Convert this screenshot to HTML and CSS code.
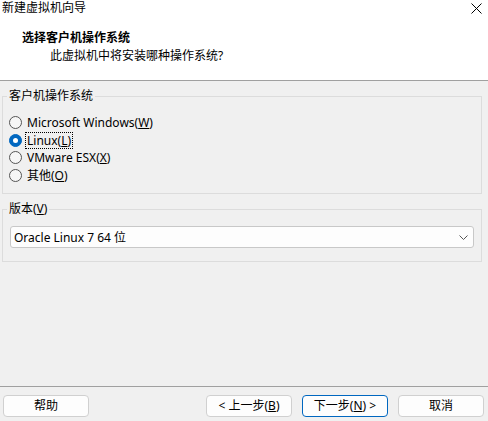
FILE: index.html
```html
<!DOCTYPE html>
<html lang="zh-CN">
<head>
<meta charset="utf-8">
<title>新建虚拟机向导</title>
<link rel="stylesheet" href="styles.css">
</head>
<body>
<div class="window">
  <div class="top">
    <div class="titlebar">
      <span class="title">新建虚拟机向导</span>
      <svg class="close" width="11" height="11" viewBox="0 0 11 11"><path d="M0.5 0.5 L10.5 10.5 M10.5 0.5 L0.5 10.5" stroke="#000" stroke-width="1" fill="none"/></svg>
    </div>
    <div class="heading">选择客户机操作系统</div>
    <div class="subheading">此虚拟机中将安装哪种操作系统?</div>
  </div>
  <div class="main">
    <fieldset class="group group-os">
      <legend class="legend">客户机操作系统</legend>
      <div class="radio-list">
        <div class="radio-row"><span class="radio"></span><span class="label">Microsoft Windows(<u>W</u>)</span></div>
        <div class="radio-row"><span class="radio checked"></span><span class="label focus">Linux(<u>L</u>)</span></div>
        <div class="radio-row"><span class="radio"></span><span class="label">VMware ESX(<u>X</u>)</span></div>
        <div class="radio-row"><span class="radio"></span><span class="label">其他(<u>O</u>)</span></div>
      </div>
    </fieldset>
    <fieldset class="group group-ver">
      <legend class="legend">版本(<u>V</u>)</legend>
      <div class="select">
        <span class="select-text">Oracle Linux 7 64 位</span>
        <svg class="chev" width="9" height="5" viewBox="0 0 9 5"><path d="M0.5 0.5 L4.5 4.5 L8.5 0.5" stroke="#555" stroke-width="1" fill="none"/></svg>
      </div>
    </fieldset>
  </div>
  <div class="footer">
    <button class="btn">帮助</button>
    <div class="spacer"></div>
    <button class="btn">&lt; 上一步(<u>B</u>)</button>
    <button class="btn primary">下一步(<u>N</u>) &gt;</button>
    <button class="btn">取消</button>
  </div>
</div>
</body>
</html>
```

FILE: styles.css
```css
* { box-sizing: border-box; }
html, body {
  margin: 0;
  padding: 0;
  background: #f0f0f0;
}
body {
  font-family: "Noto Sans", "Noto Sans CJK SC", sans-serif;
  font-size: 12px;
  color: #000;
}
.window {
  width: 488px;
  height: 421px;
  display: flex;
  flex-direction: column;
  overflow: hidden;
}
.top {
  height: 81px;
  background: #fff;
  border-bottom: 1px solid #a0a0a0;
  flex: none;
}
.titlebar {
  height: 16px;
  display: flex;
  align-items: center;
  padding-left: 2px;
  position: relative;
}
.title {
  line-height: 16px;
}
.close {
  position: absolute;
  left: 471px;
  top: 3px;
}
.heading {
  margin-top: 14px;
  margin-left: 22px;
  font-weight: bold;
  line-height: 16px;
}
.subheading {
  margin-top: 2px;
  margin-left: 50px;
  line-height: 16px;
}
.main {
  flex: 1;
  padding-top: 7px;
}
.group {
  margin: 0 0 0 2px;
  width: 480px;
  border: 1px solid #dcdcdc;
  padding: 0;
  min-width: 0;
}
.legend {
  margin-left: 4px;
  padding: 0 2px;
  line-height: 16px;
}
.radio-list {
  padding-top: 10px;
  padding-bottom: 9px;
}
.radio-row {
  height: 17.5px;
  display: flex;
  align-items: center;
  padding-left: 6px;
}
.radio {
  width: 13px;
  height: 13px;
  border-radius: 50%;
  border: 1px solid #555;
  background: #f6f6f6;
  flex: none;
  margin-right: 4px;
}
.radio.checked {
  background: #0067c0;
  border-color: #0067c0;
  display: flex;
  align-items: center;
  justify-content: center;
}
.radio.checked::after {
  content: "";
  width: 5px;
  height: 5px;
  border-radius: 50%;
  background: #fff;
}
.label {
  line-height: 15px;
  padding: 0 1px;
}
.label.focus {
  outline: 1px dotted #000;
}
.group-ver {
  margin-top: 7px;
  padding-top: 9px;
  padding-bottom: 13px;
}
.select {
  margin-left: 7px;
  width: 464px;
  height: 22px;
  background: #fdfdfd;
  border: 1px solid #c8c8c8;
  border-radius: 3px;
  display: flex;
  align-items: center;
  padding-left: 3px;
  padding-right: 5px;
}
.select-text {
  flex: 1;
}
.chev {
  flex: none;
}
.footer {
  flex: none;
  height: 35px;
  border-top: 1px solid #a0a0a0;
  display: flex;
  align-items: flex-start;
  padding: 8px 4px 0 3px;
  gap: 10px;
}
.spacer {
  flex: 1;
}
.btn {
  width: 86px;
  height: 22px;
  background: #fdfdfd;
  border: 1px solid #d0d0d0;
  border-radius: 4px;
  font-family: "Noto Sans", "Noto Sans CJK SC", sans-serif;
  font-size: 12px;
  color: #000;
  padding: 0;
  line-height: 18px;
}
.btn.primary {
  border-color: #0067c0;
}
```
